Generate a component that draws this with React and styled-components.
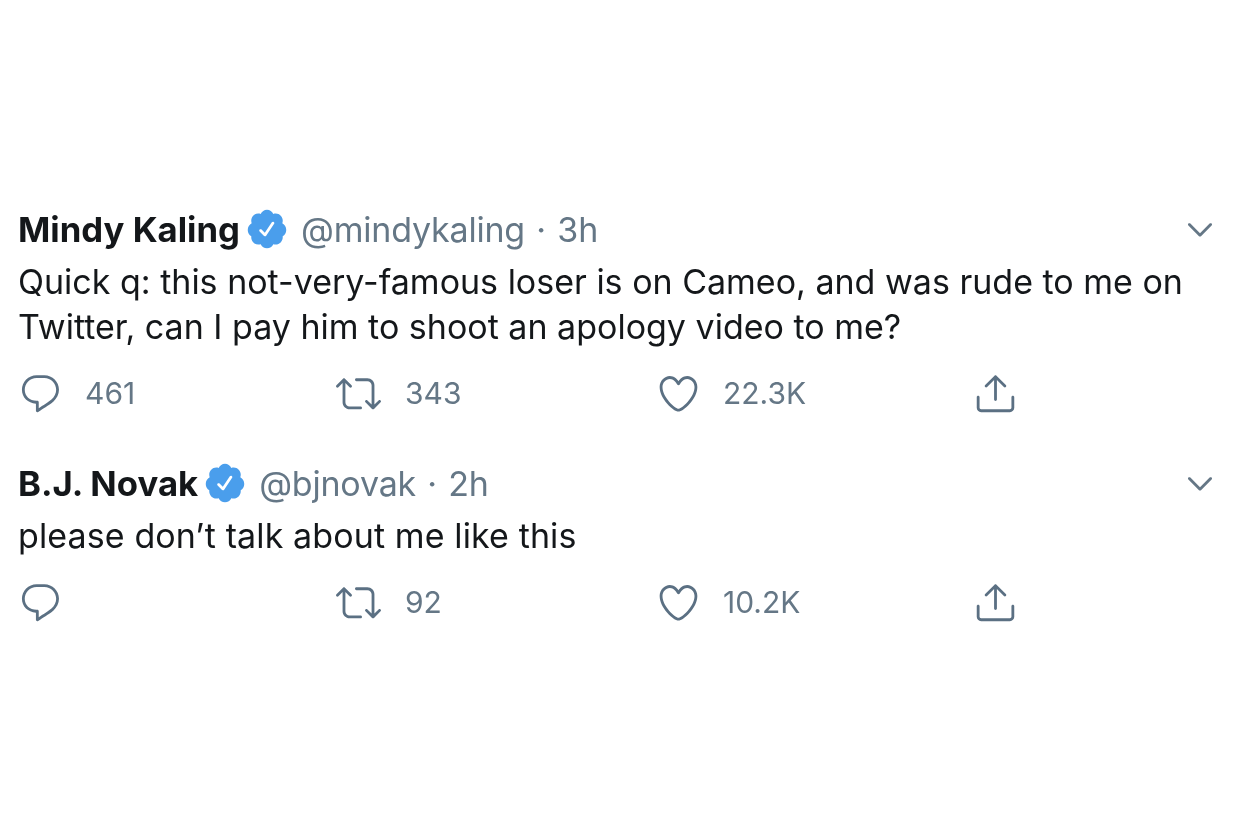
import React from "react";
import styled, { createGlobalStyle } from "styled-components";

const GlobalStyle = createGlobalStyle`
  html, body {
    margin: 0;
    padding: 0;
    background: #fff;
  }
`;

const Page = styled.div`
  width: 1250px;
  height: 830px;
  box-sizing: border-box;
  padding: 205px 0 0 18px;
  overflow: hidden;
  font-family: Inter, "Liberation Sans", sans-serif;
  filter: blur(0.4px);
`;

const TweetCard = styled.article`
  width: 1199px;
  margin-bottom: ${(p) => p.$gap}px;
`;

const Header = styled.header`
  display: flex;
  align-items: center;
  height: 48px;
  margin-bottom: 6px;
  font-size: 34px;
  white-space: nowrap;
`;

const Name = styled.span`
  font-size: 34.7px;
  font-weight: 700;
  color: #14171a;
`;

const Badge = styled.svg`
  width: 44px;
  height: 44px;
  fill: #4a9eec;
  margin: 0 12px 0 5px;
`;

const Handle = styled.span`
  color: #657786;
  letter-spacing: -0.2px;
`;

const Dot = styled.span`
  margin: 0 2px;
`;

const Chevron = styled.svg`
  width: 34px;
  height: 34px;
  fill: #657786;
  margin-left: auto;
`;

const Body = styled.p`
  margin: 0;
  font-size: 34px;
  line-height: 45px;
  letter-spacing: ${(p) => p.$track}px;
  color: #14171a;
`;

const Actions = styled.div`
  display: grid;
  grid-template-columns: 318px 320px 317px 319px;
  margin-top: 21px;
`;

const Action = styled.div`
  display: flex;
  align-items: center;
  height: 46px;
  color: #657786;
  font-size: 30px;
`;

const ActionIcon = styled.svg`
  width: 45px;
  height: 45px;
  fill: #5b7083;
  flex: none;
`;

const Count = styled.span`
  margin-left: ${(p) => p.$offset}px;
`;

const REPLY =
  "M14.046 2.242l-4.148-.01h-.002c-4.374 0-7.8 3.427-7.8 7.802 0 4.098 3.186 7.206 7.465 7.37v3.828c0 .108.044.286.12.403.142.225.384.347.632.347.138 0 .277-.038.402-.118.264-.168 6.473-4.14 8.088-5.506 1.902-1.61 3.04-3.97 3.043-6.312v-.017c-.006-4.367-3.43-7.787-7.8-7.788zm3.787 12.972c-1.134.96-4.862 3.405-6.772 4.643V16.67c0-.414-.335-.75-.75-.75h-.396c-3.66 0-6.318-2.476-6.318-5.886 0-3.534 2.768-6.302 6.3-6.302l4.147.01h.002c3.532 0 6.3 2.766 6.302 6.296-.003 1.91-.942 3.844-2.514 5.176z";
const RETWEET =
  "M23.77 15.67c-.292-.293-.767-.293-1.06 0l-2.22 2.22V7.65c0-2.068-1.683-3.75-3.75-3.75h-5.85c-.414 0-.75.336-.75.75s.336.75.75.75h5.85c1.24 0 2.25 1.01 2.25 2.25v10.24l-2.22-2.22c-.293-.293-.768-.293-1.06 0s-.294.768 0 1.06l3.5 3.5c.145.147.337.22.53.22s.383-.072.53-.22l3.5-3.5c.294-.292.294-.767 0-1.06zm-10.66 3.28H7.26c-1.24 0-2.25-1.01-2.25-2.25V6.46l2.22 2.22c.148.147.34.22.532.22s.384-.073.53-.22c.293-.293.293-.768 0-1.06l-3.5-3.5c-.293-.294-.768-.294-1.06 0l-3.5 3.5c-.294.292-.294.767 0 1.06s.767.293 1.06 0l2.22-2.22V16.7c0 2.068 1.683 3.75 3.75 3.75h5.85c.414 0 .75-.336.75-.75s-.337-.75-.75-.75z";
const HEART =
  "M12 21.638h-.014C9.403 21.59 1.95 14.856 1.95 8.478c0-3.064 2.525-5.754 5.403-5.754 2.29 0 3.83 1.58 4.646 2.73.814-1.148 2.354-2.73 4.645-2.73 2.88 0 5.404 2.69 5.404 5.755 0 6.376-7.454 13.11-10.037 13.157H12zM7.354 4.225c-2.08 0-3.903 1.988-3.903 4.255 0 5.74 7.034 11.596 8.55 11.658 1.518-.062 8.55-5.917 8.55-11.658 0-2.267-1.823-4.255-3.903-4.255-2.528 0-3.94 2.936-3.952 2.965-.23.562-1.156.562-1.387 0-.014-.03-1.425-2.965-3.954-2.965z";
const SHARE =
  "M17.53 7.47l-5-5c-.293-.293-.768-.293-1.06 0l-5 5c-.294.293-.294.768 0 1.06s.767.294 1.06 0l3.72-3.72V15.25c0 .414.336.75.75.75s.75-.336.75-.75V4.81l3.72 3.72c.146.147.338.22.53.22s.384-.072.53-.22c.293-.293.293-.767 0-1.06zM19.708 21.944H4.292C3.028 21.944 2 20.916 2 19.652V14c0-.414.336-.75.75-.75s.75.336.75.75v5.652c0 .437.355.792.792.792h15.416c.437 0 .792-.355.792-.792V14c0-.414.336-.75.75-.75s.75.336.75.75v5.652c0 1.264-1.028 2.292-2.292 2.292z";
const VERIFIED =
  "M22.5 12.5c0-1.58-.875-2.95-2.148-3.6.154-.435.238-.905.238-1.4 0-2.21-1.71-3.998-3.818-3.998-.47 0-.92.084-1.336.25C14.818 2.415 13.51 1.5 12 1.5s-2.816.917-3.437 2.25c-.415-.165-.866-.25-1.336-.25-2.11 0-3.818 1.79-3.818 4 0 .494.083.964.237 1.4-1.272.65-2.147 2.018-2.147 3.6 0 1.495.782 2.798 1.942 3.486-.02.17-.032.34-.032.514 0 2.21 1.708 4 3.818 4 .47 0 .92-.086 1.335-.25.62 1.334 1.926 2.25 3.437 2.25 1.512 0 2.818-.916 3.437-2.25.415.163.865.248 1.336.248 2.11 0 3.818-1.79 3.818-4 0-.174-.012-.344-.033-.513 1.158-.687 1.943-1.99 1.943-3.484zm-6.616-3.334l-4.334 6.5c-.145.217-.382.334-.625.334-.143 0-.288-.04-.416-.126l-.115-.094-2.415-2.415c-.293-.293-.293-.768 0-1.06s.768-.294 1.06 0l1.77 1.767 3.825-5.74c.23-.345.696-.436 1.04-.207.346.23.44.696.21 1.04z";
const CARET =
  "M20.207 8.147c-.39-.39-1.023-.39-1.414 0L12 14.94 5.207 8.147c-.39-.39-1.023-.39-1.414 0-.39.39-.39 1.023 0 1.414l7.5 7.5c.195.195.45.293.707.293s.512-.098.707-.293l7.5-7.5c.39-.39.39-1.023 0-1.414z";

function Icon({ d }) {
  return (
    <ActionIcon viewBox="0 0 24 24">
      <path d={d} />
    </ActionIcon>
  );
}

function Tweet({ name, handle, age, lines, track, reply, retweets, likes, gap }) {
  return (
    <TweetCard $gap={gap}>
      <Header>
        <Name>{name}</Name>
        <Badge viewBox="0 0 24 24">
          <path d={VERIFIED} />
        </Badge>
        <Handle>
          {handle}
          <Dot> · </Dot>
          {age}
        </Handle>
        <Chevron viewBox="0 0 24 24">
          <path d={CARET} />
        </Chevron>
      </Header>
      <Body $track={track}>
        {lines.map((line) => (
          <React.Fragment key={line}>
            {line}
            <br />
          </React.Fragment>
        ))}
      </Body>
      <Actions>
        <Action>
          <Icon d={REPLY} />
          {reply && <Count $offset={22}>{reply}</Count>}
        </Action>
        <Action>
          <Icon d={RETWEET} />
          <Count $offset={24}>{retweets}</Count>
        </Action>
        <Action>
          <Icon d={HEART} />
          <Count $offset={22}>{likes}</Count>
        </Action>
        <Action>
          <Icon d={SHARE} />
        </Action>
      </Actions>
    </TweetCard>
  );
}

export default function App() {
  return (
    <Page>
      <GlobalStyle />
      <Tweet
        name="Mindy Kaling"
        handle="@mindykaling"
        age="3h"
        lines={[
          "Quick q: this not-very-famous loser is on Cameo, and was rude to me on",
          "Twitter, can I pay him to shoot an apology video to me?",
        ]}
        track={0}
        reply="461"
        retweets="343"
        likes="22.3K"
        gap={43}
      />
      <Tweet
        name="B.J. Novak"
        handle="@bjnovak"
        age="2h"
        lines={["please don’t talk about me like this"]}
        track={0.11}
        retweets="92"
        likes="10.2K"
        gap={0}
      />
    </Page>
  );
}
